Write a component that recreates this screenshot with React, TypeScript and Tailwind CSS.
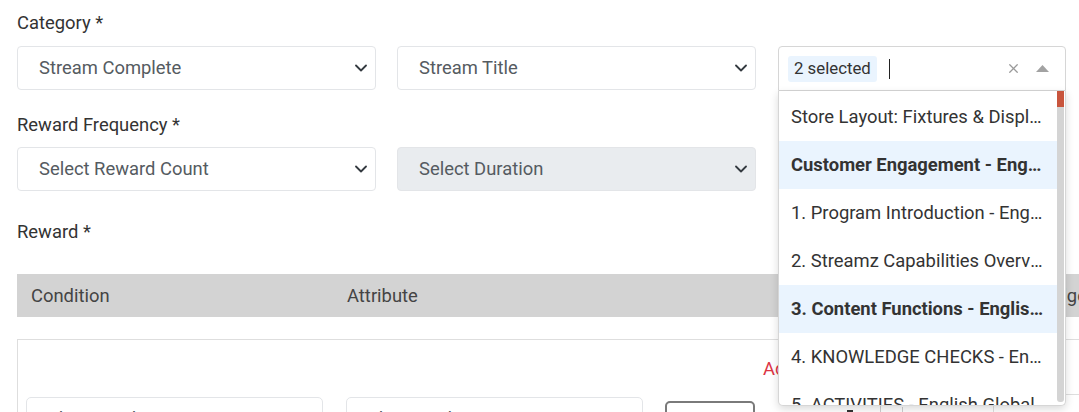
import { X } from "lucide-react";

const font = { fontFamily: "Roboto, 'Liberation Sans', sans-serif" };

const Chevron = () => (
  <svg width="12" height="8" viewBox="0 0 12 8" className="shrink-0">
    <path d="M1 1.5 6 6.5 11 1.5" fill="none" stroke="#343a40" strokeWidth="1.8" strokeLinecap="round" strokeLinejoin="round" />
  </svg>
);

const Select = ({ value, disabled }: { value: string; disabled?: boolean }) => (
  <div
    className={
      "w-[359px] h-[44px] flex items-center justify-between pl-[21px] pr-[8px] rounded-[4px] border border-[#e3e5e8] text-[18.4px] text-[#555b61] " +
      (disabled ? "bg-[#e9ecef]" : "bg-white")
    }
  >
    <span>{value}</span>
    <Chevron />
  </div>
);

const options = [
  { label: "Store Layout: Fixtures & Displays - English Global", selected: false },
  { label: "Customer Engagement - English Global", selected: true },
  { label: "1. Program Introduction - English Global", selected: false },
  { label: "2. Streamz Capabilities Overview - English Global", selected: false },
  { label: "3. Content Functions - English Global", selected: true },
  { label: "4. KNOWLEDGE CHECKS - English Global", selected: false },
  { label: "5. ACTIVITIES - English Global", selected: false },
];

const MultiSelect = () => (
  <div className="relative w-[288px]">
    <div className="h-[45px] flex items-center pl-[9px] pr-[16px] border border-[#d6d6d6] rounded-t-[4px] bg-white">
      <span className="h-[26px] px-[6px] flex items-center rounded-[3px] bg-[#eaf4fe] text-[16.8px] text-[#333]">
        2 selected
      </span>
      <span className="ml-[12px] w-[1.5px] h-[20px] bg-[#222]" />
      <span className="flex-1" />
      <X size={15} color="#9a9a9a" strokeWidth={2} />
      <svg width="13" height="8" viewBox="0 0 13 8" className="ml-[15px]">
        <path d="M6.5 0 13 7H0z" fill="#a2a2a2" />
      </svg>
    </div>
    <div className="absolute left-0 top-full z-10 w-[288px] h-[315px] flex bg-white border-x border-b border-[#d6d6d6] rounded-b-[5px] shadow-[0_3px_8px_rgba(0,0,0,0.15)] overflow-hidden">
      <div className="flex-1 min-w-0 flex flex-col pt-[2px]">
        {options.map((o) => (
          <div
            key={o.label}
            className={
              "h-[48px] shrink-0 flex items-center pl-[12px] pr-[12px] text-[18.4px] text-[#333] " +
              (o.selected ? "bg-[#eaf4fe] font-bold" : "")
            }
          >
            <span className="truncate">{o.label}</span>
          </div>
        ))}
      </div>
      <div className="w-[7px] mr-[1px] mb-[3px] flex flex-col bg-[#d4d4d4] rounded-b-[3px]">
        <div className="h-[16px] bg-[#c8553d]" />
      </div>
    </div>
  </div>
);

const Box = ({ text, w }: { text: string; w: string }) => (
  <div className={"h-[44px] flex items-center pl-[11px] rounded-[5px] border border-[#e3e5e8] text-[18.4px] text-[#555b61] " + w}>
    {text}
  </div>
);

export default function App() {
  return (
    <div className="w-[1079px] h-[412px] overflow-hidden bg-white" style={font}>
      <div className="w-[1300px] pl-[17px] pt-[10px]">
        <div className="text-[18.4px] leading-[26px] text-[#333] mb-[10px]">Category *</div>
        <div className="flex gap-[21px]">
          <Select value="Stream Complete" />
          <Select value="Stream Title" />
          <div className="ml-[1px]">
            <MultiSelect />
          </div>
        </div>

        <div className="text-[18.4px] leading-[26px] text-[#333] mt-[21px] mb-[9px]">Reward Frequency *</div>
        <div className="flex gap-[21px]">
          <Select value="Select Reward Count" />
          <Select value="Select Duration" disabled />
        </div>

        <div className="text-[18.4px] leading-[26px] text-[#333] mt-[28px]">Reward *</div>

        <div className="mt-[29px] h-[43px] flex items-center bg-[#d3d3d3] text-[18.4px] text-[#444]">
          <div className="w-[330px] pl-[14px]">Condition</div>
          <div className="w-[688px]">Attribute</div>
          <div>Badge</div>
        </div>

        <div className="mt-[22px] border border-[#dedede] pl-[8px] pt-[16px]">
          <div className="pl-[737px] text-[18.4px] leading-[26px] text-[#dc3545]">Add Condition</div>
          <div className="mt-[15px] flex items-start">
            <Box text="Select Condition" w="w-[297px]" />
            <Box text="Select Attribute" w="w-[297px] ml-[23px]" />
            <div className="ml-[22px] mt-[4px] w-[90px] h-[38px] rounded-[5px] border-2 border-[#7a7a7a] bg-white" />
            <svg width="16" height="18" viewBox="0 0 16 18" className="ml-[87px] mt-[13px]">
              <rect x="1" y="2" width="14" height="2" fill="#333" />
              <rect x="5" y="0" width="6" height="2" fill="#333" />
              <rect x="2.5" y="5" width="11" height="13" rx="1" fill="#333" />
            </svg>
            <div className="ml-[22px] mt-[-1px] w-[114px] h-[44px] border-l border-t border-[#cfcfcf] flex">
              <div className="w-[22px] mt-[10px] border-r border-[#cfcfcf]" />
            </div>
            <div className="ml-[-1px] mt-[-3px] w-[200px] h-[44px] border-l border-t border-[#dedede] pl-[76px] pt-[10px] text-[18.4px] text-[#555]">
              Select
            </div>
          </div>
        </div>
      </div>
    </div>
  );
}
